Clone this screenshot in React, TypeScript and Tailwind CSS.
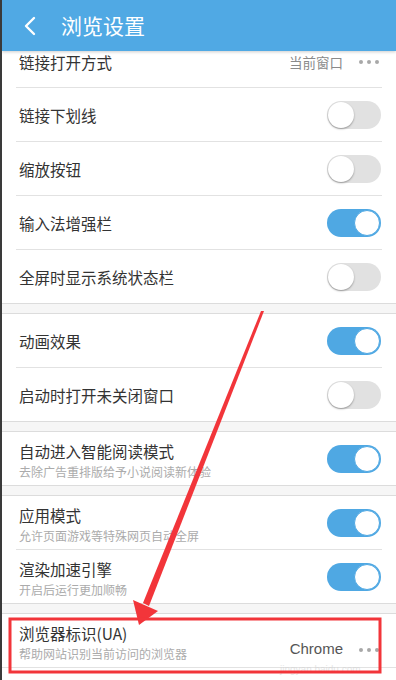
import React from "react";

const FONT = { fontFamily: '"Noto Sans CJK SC", "Noto Sans", sans-serif' };
const LATIN = { fontFamily: '"Liberation Sans", sans-serif' };

function Toggle({ on }: { on?: boolean }) {
  return (
    <div
      className={`relative h-[28px] w-[54px] shrink-0 rounded-full ${
        on ? "bg-[#4fa8e3]" : "bg-[#e1e1e1]"
      }`}
    >
      <div
        className={`absolute top-px h-[26px] w-[26px] rounded-full bg-white ${
          on
            ? "right-px border border-[#4fa8e3]"
            : "left-px shadow-[0_1px_2px_rgba(0,0,0,0.35)]"
        }`}
      />
    </div>
  );
}

function Dots() {
  return (
    <div className="flex items-center gap-[4px]">
      <span className="h-[4px] w-[4px] rounded-full bg-[#a8a8a8]" />
      <span className="h-[4px] w-[4px] rounded-full bg-[#a8a8a8]" />
      <span className="h-[4px] w-[4px] rounded-full bg-[#a8a8a8]" />
    </div>
  );
}

function Row({
  title,
  sub,
  on,
  divider,
}: {
  title: string;
  sub?: string;
  on?: boolean;
  divider?: boolean;
}) {
  return (
    <>
      {divider && <div className="mx-[14px] h-px bg-[#e2e2e2]" />}
      <div className="flex h-[53px] items-center justify-between pl-[17px] pr-[15px]">
        {sub ? (
          <div className="flex h-full flex-col pt-[8px]">
            <span className="text-[15.5px] leading-[22px] text-[#333]">{title}</span>
            <span className="mt-px text-[12px] leading-[18px] text-[#ababab]">{sub}</span>
          </div>
        ) : (
          <span className="text-[15.5px] leading-[22px] text-[#333]">{title}</span>
        )}
        <Toggle on={on} />
      </div>
    </>
  );
}

function Gap() {
  return <div className="h-[11px] border-y border-[#dcdcdc] bg-[#f6f6f6]" />;
}

export default function App() {
  return (
    <div
      className="relative h-[680px] w-[396px] overflow-hidden border-l-2 border-[#3a3a3a] bg-white"
      style={FONT}
    >
      <header className="relative z-10 flex h-[51px] items-center bg-[#50a9e4] shadow-[0_1px_3px_rgba(0,0,0,0.2)]">
        <svg width="14" height="20" viewBox="0 0 14 20" className="ml-[21px]">
          <path d="M11 2L3 10l8 8" fill="none" stroke="#fff" strokeWidth="2.4" strokeLinecap="round" strokeLinejoin="round" />
        </svg>
        <h1 className="ml-[24px] text-[21px] leading-none text-white">浏览设置</h1>
      </header>

      <div className="bg-white">
        <div className="flex h-[36px] items-start justify-between pl-[17px] pr-[17px]">
          <span className="text-[15.5px] leading-[22px] text-[#333]">链接打开方式</span>
          <div className="flex h-[22px] items-center gap-[16px]">
            <span className="text-[13.5px] text-[#8a8a8a]">当前窗口</span>
            <Dots />
          </div>
        </div>
        <Row title="链接下划线" divider />
        <Row title="缩放按钮" divider />
        <Row title="输入法增强栏" on divider />
        <Row title="全屏时显示系统状态栏" divider />
      </div>
      <Gap />
      <div className="bg-white">
        <Row title="动画效果" on />
        <Row title="启动时打开未关闭窗口" divider />
      </div>
      <Gap />
      <div className="bg-white">
        <Row title="自动进入智能阅读模式" sub="去除广告重排版给予小说阅读新体验" on />
      </div>
      <Gap />
      <div className="bg-white">
        <Row title="应用模式" sub="允许页面游戏等特殊网页自动全屏" on />
        <Row title="渲染加速引擎" sub="开启后运行更加顺畅" on divider />
      </div>
      <Gap />
      <div className="bg-white">
        <div className="flex h-[53px] items-center justify-between pl-[17px] pr-[17px]">
          <div className="flex h-full flex-col pt-[8px]">
            <span className="text-[15.5px] leading-[22px] text-[#333]">浏览器标识(UA)</span>
            <span className="mt-px text-[12px] leading-[18px] text-[#ababab]">帮助网站识别当前访问的浏览器</span>
          </div>
          <div className="flex items-center gap-[16px] pt-[18px]">
            <span className="text-[15px] text-[#555]" style={LATIN}>
              Chrome
            </span>
            <Dots />
          </div>
        </div>
        <div className="h-px bg-[#e2e2e2]" />
      </div>

      {/* watermark */}
      <div className="pointer-events-none absolute left-[278px] top-[654px] opacity-50">
        <span className="text-[10px] leading-none text-[#cfcfcf]" style={LATIN}>
          jingyan.baidu.com
        </span>
      </div>

      {/* annotation */}
      <svg className="pointer-events-none absolute left-[-2px] top-0" width="396" height="680" viewBox="0 0 396 680">
        <polygon points="261,311 264,311 149,606 143,603" fill="#f2353a" />
        <polygon points="139,625 133,600 158,611" fill="#f2353a" />
        <rect x="10" y="619" width="370" height="53" fill="none" stroke="#f2353a" strokeWidth="3" />
      </svg>
    </div>
  );
}
